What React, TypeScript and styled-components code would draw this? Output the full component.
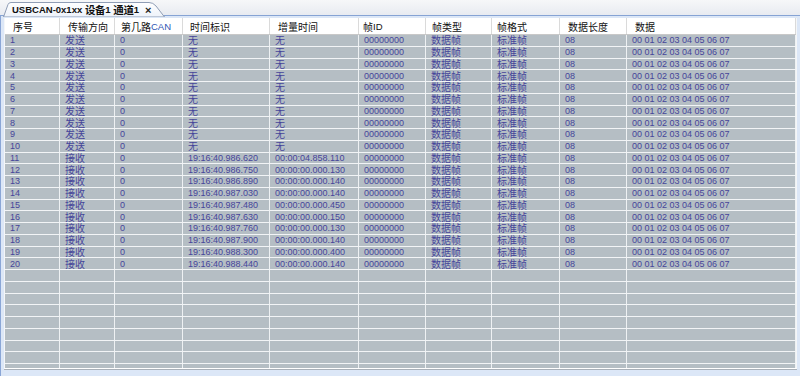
import React from "react";
import styled, { createGlobalStyle } from "styled-components";

const Global = createGlobalStyle`
  html, body { margin: 0; padding: 0; }
  body { width: 800px; height: 376px; overflow: hidden; font-family: "Liberation Sans", "Noto Sans CJK SC", sans-serif; }
`;

const LATIN = `"Liberation Sans", "Noto Sans CJK SC", sans-serif`;
const CJK = `"Noto Sans CJK SC", sans-serif`;

const Page = styled.div`
  width: 800px;
  height: 376px;
  display: flex;
  flex-direction: column;
  background: #dce7f7;
  overflow: hidden;
`;

const TabStrip = styled.div`
  height: 15px;
  flex: none;
  display: flex;
  align-items: flex-end;
  padding-left: 3px;
  background: linear-gradient(#f6f7f9, #e8ebf1);
  border-bottom: 1px solid #86a3d4;
`;

const SubStrip = styled.div`
  height: 2px;
  flex: none;
  background: #dce7f7;
  border-left: 1px solid #8aa6d6;
`;

const Tab = styled.div`
  position: relative;
  height: 14px;
  width: 162px;
  box-sizing: border-box;
  padding: 1px 0 0 9px;
  display: flex;
  align-items: center;
  white-space: nowrap;
  margin-bottom: -1px;
`;

const TabShape = styled.svg`
  position: absolute;
  left: 0;
  top: 0;
  width: 162px;
  height: 15px;
`;

const TabLatin = styled.span`
  position: relative;
  font-family: ${LATIN};
  font-weight: bold;
  font-size: 9.5px;
  line-height: 12px;
  color: #111;
`;

const TabCjk = styled.span`
  position: relative;
  font-family: ${CJK};
  font-weight: bold;
  font-size: 10.5px;
  line-height: 12px;
  color: #111;
  letter-spacing: -0.3px;
`;

const TabClose = styled.span`
  position: relative;
  font-family: ${LATIN};
  font-weight: bold;
  font-size: 11px;
  line-height: 12px;
  color: #222;
  margin-left: 6px;
`;

const Content = styled.div`
  flex: 1;
  min-height: 0;
  display: flex;
  flex-direction: column;
  border-left: 1px solid #8aa6d6;
  padding: 0 3px 7px 3px;
`;

const Table = styled.div`
  flex: 1;
  min-height: 0;
  display: flex;
  flex-direction: column;
  border-left: 1px solid #f4f6f8;
  border-right: 1px solid #f4f6f8;
  border-bottom: 1px solid #ffffff;
  box-shadow: 0 1px 0 #a9b0b8;
  background: #b5bec4;
`;

const HeaderRow = styled.div`
  height: 17px;
  flex: none;
  box-sizing: border-box;
  display: flex;
  background: #ffffff;
  border-bottom: 1px solid #c8c8c8;
`;

const HeadCell = styled.div<{ $w: number; $pad: number }>`
  width: ${(p) => p.$w}px;
  flex: none;
  box-sizing: border-box;
  padding: 1px 0 0 ${(p) => p.$pad}px;
  border-right: 1px solid #dadada;
  display: flex;
  align-items: center;
  font-family: ${CJK};
  font-size: 10px;
  line-height: 12px;
  color: #111;
  white-space: nowrap;
`;

const HeadLatin = styled.span<{ $blue?: boolean }>`
  font-family: ${LATIN};
  font-size: 9.5px;
  color: ${(p) => (p.$blue ? "#2f55b5" : "#111")};
`;

const Body = styled.div`
  flex: 1;
  min-height: 0;
  overflow: hidden;
`;

const Row = styled.div`
  height: 11.75px;
  box-sizing: border-box;
  display: flex;
  border-bottom: 1px solid #f2f4f6;
`;

const Cell = styled.div<{ $w: number; $cjk?: boolean }>`
  width: ${(p) => p.$w}px;
  flex: none;
  box-sizing: border-box;
  padding-left: 5px;
  border-right: 1px solid #eef1f3;
  display: flex;
  align-items: center;
  font-family: ${(p) => (p.$cjk ? CJK : LATIN)};
  font-size: ${(p) => (p.$cjk ? "10px" : "9px")};
  line-height: 10px;
  color: #45459a;
  white-space: nowrap;
`;

const widths = [55, 55, 68, 87, 89, 67, 66, 68, 67, 169];
const headPads = [8, 8, 6, 7, 8, 4, 6, 5, 8, 8];

type Col = { cjk: string; latin?: string; blue?: boolean };
const headers: Col[] = [
  { cjk: "序号" },
  { cjk: "传输方向" },
  { cjk: "第几路", latin: "CAN", blue: true },
  { cjk: "时间标识" },
  { cjk: "增量时间" },
  { cjk: "帧", latin: "ID" },
  { cjk: "帧类型" },
  { cjk: "帧格式" },
  { cjk: "数据长度" },
  { cjk: "数据" },
];

const times: [string, string][] = [
  ["19:16:40.986.620", "00:00:04.858.110"],
  ["19:16:40.986.750", "00:00:00.000.130"],
  ["19:16:40.986.890", "00:00:00.000.140"],
  ["19:16:40.987.030", "00:00:00.000.140"],
  ["19:16:40.987.480", "00:00:00.000.450"],
  ["19:16:40.987.630", "00:00:00.000.150"],
  ["19:16:40.987.760", "00:00:00.000.130"],
  ["19:16:40.987.900", "00:00:00.000.140"],
  ["19:16:40.988.300", "00:00:00.000.400"],
  ["19:16:40.988.440", "00:00:00.000.140"],
];

type RowData = string[];
const rows: RowData[] = Array.from({ length: 20 }, (_, i) => {
  const send = i < 10;
  const t = send ? ["无", "无"] : times[i - 10];
  return [
    String(i + 1),
    send ? "发送" : "接收",
    "0",
    t[0],
    t[1],
    "00000000",
    "数据帧",
    "标准帧",
    "08",
    "00 01 02 03 04 05 06 07",
  ];
});

const isCjk = (s: string) => /[\u4e00-\u9fff]/.test(s);

export default function App() {
  return (
    <>
      <Global />
      <Page>
        <TabStrip>
          <Tab>
            <TabShape viewBox="0 0 162 15">
              <defs>
                <linearGradient id="tabg" x1="0" y1="0" x2="0" y2="1">
                  <stop offset="0" stopColor="#ffffff" />
                  <stop offset="1" stopColor="#edf2fa" />
                </linearGradient>
              </defs>
              <path
                d="M0.5 15 L5 2.5 Q5.8 0.5 8 0.5 L146 0.5 Q150 0.5 153 4 L161.5 15 Z"
                fill="url(#tabg)"
                stroke="#8f9db5"
                strokeWidth="1"
              />
            </TabShape>
            <TabLatin>USBCAN-0x1xx&nbsp;</TabLatin>
            <TabCjk>设备</TabCjk>
            <TabLatin>1&nbsp;</TabLatin>
            <TabCjk>通道</TabCjk>
            <TabLatin>1</TabLatin>
            <TabClose>×</TabClose>
          </Tab>
        </TabStrip>
        <SubStrip />
        <Content>
          <Table>
            <HeaderRow>
              {headers.map((h, i) => (
                <HeadCell key={i} $w={widths[i]} $pad={headPads[i]}>
                  {h.cjk}
                  {h.latin && <HeadLatin $blue={h.blue}>{h.latin}</HeadLatin>}
                </HeadCell>
              ))}
            </HeaderRow>
            <Body>
              {rows.map((r, ri) => (
                <Row key={ri}>
                  {r.map((v, ci) => (
                    <Cell key={ci} $w={widths[ci]} $cjk={isCjk(v)}>
                      {v}
                    </Cell>
                  ))}
                </Row>
              ))}
              {Array.from({ length: 10 }, (_, ri) => (
                <Row key={"e" + ri}>
                  {widths.map((w, ci) => (
                    <Cell key={ci} $w={w} />
                  ))}
                </Row>
              ))}
            </Body>
          </Table>
        </Content>
      </Page>
    </>
  );
}
